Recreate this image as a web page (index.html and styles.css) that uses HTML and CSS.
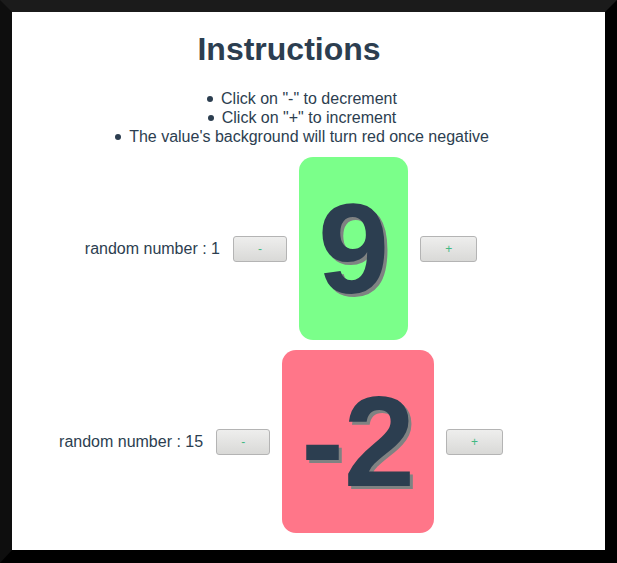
FILE: index.html
```html
<!DOCTYPE html>
<html lang="en">
<head>
  <meta charset="UTF-8" />
  <meta name="viewport" content="width=device-width, initial-scale=1.0" />
  <title>Counter</title>
  <link rel="stylesheet" href="styles.css">
</head>
<body>
  <div class="frame">
    <div id="app">
      <h1>Instructions</h1>
      <ul class="instructions">
        <li>Click on "-" to decrement</li>
        <li>Click on "+" to increment</li>
        <li>The value's background will turn red once negative</li>
      </ul>

      <div class="counter">
        <span class="label">random number : 1</span>
        <button class="btn">-</button>
        <div class="value positive">9</div>
        <button class="btn">+</button>
      </div>

      <div class="counter">
        <span class="label">random number : 15</span>
        <button class="btn">-</button>
        <div class="value negative">-2</div>
        <button class="btn">+</button>
      </div>
    </div>
  </div>
</body>
</html>
```

FILE: styles.css
```css
html, body {
  margin: 0;
  padding: 0;
  height: 100%;
}
body {
  font-family: 'Liberation Sans', Arial, sans-serif;
  color: #2c3e50;
  background-color: #000;
}
.frame {
  box-sizing: border-box;
  height: 100%;
  background-color: #fff;
  border-style: solid;
  border-width: 12px 12px 13px 12px;
  border-color: #1b1b1b #000 #000 #0e0e0e;
  overflow: hidden;
}
#app {
  text-align: center;
}
h1 {
  font-size: 32px;
  margin: 19px 0 21px;
  padding-right: 39px;
}
.instructions {
  list-style: none;
  margin: 0 0 11px;
  padding: 0 13px 0 0;
  font-size: 16px;
  line-height: 19px;
}
/* puce ronde devant chaque consigne */
.instructions li::before {
  content: "";
  display: inline-block;
  width: 6px;
  height: 6px;
  border-radius: 50%;
  background-color: #2c3e50;
  margin-right: 8px;
  vertical-align: 2px;
}
/* chaque ligne : libellé, bouton, valeur, bouton */
.counter {
  display: flex;
  justify-content: center;
  align-items: center;
  gap: 12px;
  margin: 0 55px 10px 0;
}
.label {
  font-size: 16px;
  padding-right: 1px;
}
.btn {
  font-family: 'Liberation Sans', Arial, sans-serif;
  font-size: 12px;
  color: #42b983;
  height: 26px;
  padding: 0 24px;
  border: 1px solid #b4b4b4;
  border-radius: 3px;
  background: linear-gradient(#eeeeed, #d9d9d7);
  cursor: pointer;
}
.value {
  font-size: 128px;
  font-weight: bold;
  padding: 18px 19px;
  border-radius: 14px;
  text-shadow: 3px 3px 0 #7f8282;
}
.positive {
  background-color: #7bff8a;
}
.negative {
  background-color: #ff7689;
}
```
